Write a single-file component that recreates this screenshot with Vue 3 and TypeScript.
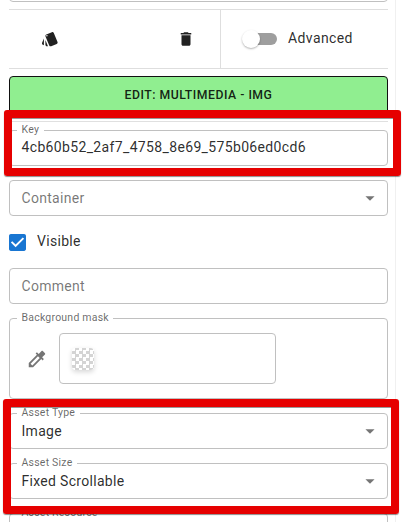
<script setup lang="ts">
import { ref } from 'vue'

interface SelectField {
  label: string
  value: string
}

const advanced = ref(false)
const visible = ref(true)
const key = '4cb60b52_2af7_4758_8e69_575b06ed0cd6'
const assetFields: SelectField[] = [
  { label: 'Asset Type', value: 'Image' },
  { label: 'Asset Size', value: 'Fixed Scrollable' },
]
</script>

<template>
  <div class="page">
    <main class="panel">
      <div class="field previous"></div>

      <div class="toolbar">
        <div class="actions">
          <svg class="icon-18" viewBox="0 0 24 24"><path d="M2.53 19.65l1.34.56v-9.03l-2.43 5.86c-.41 1.02.08 2.19 1.09 2.61zm19.5-3.7L17.07 3.98c-.31-.75-1.04-1.21-1.81-1.23-.26 0-.53.04-.79.15L7.1 5.95c-.75.31-1.21 1.03-1.23 1.8-.01.27.04.54.15.8l4.96 11.97c.31.76 1.05 1.22 1.83 1.23.26 0 .52-.05.77-.15l7.36-3.05c1.02-.42 1.51-1.59 1.09-2.6zM7.88 8.75c-.55 0-1-.45-1-1s.45-1 1-1 1 .45 1 1-.45 1-1 1zm-2 11c0 1.1.9 2 2 2h1.45l-3.45-8.34v6.34z" /></svg>
          <svg class="icon-18" viewBox="0 0 24 24"><path d="M6 19c0 1.1.9 2 2 2h8c1.1 0 2-.9 2-2V7H6v12zM19 4h-3.5l-1-1h-5l-1 1H5v2h14V4z" /></svg>
        </div>
        <div class="advanced" @click="advanced = !advanced">
          <span class="switch" :class="{ on: advanced }"><span class="thumb"></span></span>
          <span class="text adv">Advanced</span>
        </div>
      </div>

      <button class="edit">Edit: Multimedia - Img</button>

      <section class="details">
        <div class="field">
          <span class="label">Key</span>
          <span class="text key">{{ key }}</span>
        </div>

        <div class="field container">
          <span class="text placeholder">Container</span>
          <svg class="arrow" viewBox="0 0 24 24"><path d="M7 10l5 5 5-5z" /></svg>
        </div>

        <div class="check" @click="visible = !visible">
          <svg class="box" viewBox="3 3 18 18">
            <path v-if="visible" d="M19 3H5c-1.11 0-2 .9-2 2v14c0 1.1.89 2 2 2h14c1.11 0 2-.9 2-2V5c0-1.1-.89-2-2-2zm-9 14l-5-5 1.41-1.41L10 14.17l7.59-7.59L19 8l-9 9z" />
            <path v-else d="M19 5v14H5V5h14m0-2H5c-1.1 0-2 .9-2 2v14c0 1.1.9 2 2 2h14c1.1 0 2-.9 2-2V5c0-1.1-.9-2-2-2z" />
          </svg>
          <span class="text check-text">Visible</span>
        </div>

        <div class="field comment">
          <span class="text placeholder">Comment</span>
        </div>

        <div class="mask">
          <span class="label">Background mask</span>
          <svg class="picker" viewBox="0 0 24 24"><path d="M20.71 5.63l-2.34-2.34c-.39-.39-1.02-.39-1.41 0l-3.12 3.12-1.93-1.91-1.41 1.41 1.42 1.42L3 16.25V21h4.75l8.92-8.92 1.42 1.42 1.41-1.41-1.92-1.92 3.12-3.12c.4-.4.4-1.03.01-1.42zM6.92 19L5 17.08l8.06-8.06 1.92 1.92L6.92 19z" /></svg>
          <div class="color"><span class="swatch"></span></div>
        </div>

        <div v-for="f in assetFields" :key="f.label" class="field asset">
          <span class="label">{{ f.label }}</span>
          <span class="text">{{ f.value }}</span>
          <svg class="arrow" viewBox="0 0 24 24"><path d="M7 10l5 5 5-5z" /></svg>
        </div>

        <div class="field asset">
          <span class="label">Asset Resource</span>
        </div>
      </section>
    </main>

    <div class="mark mark-key"></div>
    <div class="mark mark-asset"></div>
  </div>
</template>

<style>
body {
  background: #fff;
  overflow: hidden;
}
</style>

<style scoped>
.page {
  position: relative;
  width: 406px;
  height: 522px;
  overflow: hidden;
  font-family: Roboto, 'Liberation Sans', sans-serif;
  color: rgba(0, 0, 0, 0.84);
}
.panel {
  box-sizing: border-box;
  width: 396px;
  height: 522px;
  padding: 0 7px 0 9px;
  border-right: 1px solid #f0f0f0;
  overflow: hidden;
}
.field {
  position: relative;
  box-sizing: border-box;
  height: 36px;
  display: flex;
  align-items: center;
  justify-content: space-between;
  padding: 0 6.5px 0 11.5px;
  border: 1px solid #c0c0c0;
  border-radius: 4px;
}
.previous {
  margin-top: -34px;
}
.text {
  font-size: 14px;
  line-height: 20px;
  letter-spacing: 0.3px;
  white-space: nowrap;
}
.key {
  margin-top: -2px;
  letter-spacing: 0.35px;
}
.placeholder {
  color: rgba(0, 0, 0, 0.55);
}
.label {
  position: absolute;
  top: -7px;
  left: 7px;
  padding: 0 4.5px;
  background: #fff;
  font-size: 10.5px;
  line-height: 12px;
  letter-spacing: 0.22px;
  color: rgba(0, 0, 0, 0.6);
  white-space: nowrap;
}
.toolbar {
  box-sizing: border-box;
  display: flex;
  height: 60px;
  margin-top: 7px;
  border-top: 1px solid #dedede;
  border-bottom: 1px solid #dedede;
}
.actions {
  box-sizing: border-box;
  width: 212px;
  display: flex;
  align-items: center;
  justify-content: space-between;
  padding: 0 25px 0 32px;
  border-right: 1px solid #dedede;
}
.icon-18 {
  width: 18px;
  height: 18px;
  fill: #212121;
}
.advanced {
  display: flex;
  align-items: center;
  padding-left: 24px;
}
.switch {
  display: flex;
  align-items: center;
  width: 32px;
  height: 12px;
  border-radius: 6px;
  background: #9e9e9e;
}
.switch.on {
  justify-content: flex-end;
}
.thumb {
  width: 18px;
  height: 18px;
  margin-left: -3px;
  border-radius: 50%;
  background: #fff;
  box-shadow: 0 1px 2px rgba(0, 0, 0, 0.3);
}
.adv {
  margin: -2px 0 0 11px;
  letter-spacing: 0.4px;
}
.edit {
  display: block;
  box-sizing: border-box;
  width: 100%;
  height: 38px;
  margin-top: 7px;
  padding: 0;
  border: 1px solid #111;
  border-radius: 4px;
  background: #90ee90;
  font-family: inherit;
  font-size: 12.25px;
  font-weight: 500;
  letter-spacing: 0.5px;
  text-transform: uppercase;
  color: rgba(0, 0, 0, 0.87);
}
.details {
  margin-top: 7px;
  padding-top: 8px;
  border-top: 1px solid #e0e0e0;
}
.container {
  margin-top: 14px;
}
.arrow {
  width: 22px;
  height: 22px;
  fill: rgba(0, 0, 0, 0.54);
}
.check {
  display: flex;
  align-items: center;
  gap: 11px;
  height: 52px;
}
.check-text {
  margin-top: -2px;
}
.box {
  width: 17px;
  height: 17px;
  fill: #1976d2;
}
.mask {
  position: relative;
  box-sizing: border-box;
  height: 81px;
  margin-top: 14px;
  padding-left: 16px;
  display: flex;
  align-items: center;
  gap: 11px;
  border: 1px solid #c0c0c0;
  border-radius: 4px;
}
.picker {
  width: 22px;
  height: 22px;
  fill: rgba(0, 0, 0, 0.54);
}
.color {
  box-sizing: border-box;
  width: 217px;
  height: 51px;
  padding-left: 12px;
  display: flex;
  align-items: center;
  border: 1px solid #c0c0c0;
  border-radius: 4px;
}
.swatch {
  width: 22px;
  height: 22px;
  border-radius: 4px;
  background: repeating-conic-gradient(#d4d4d4 0 25%, #fff 0 50%) 0 -1px / 7px 7px;
  box-shadow: 0 2px 5px rgba(0, 0, 0, 0.16);
}
.asset {
  margin-top: 14px;
}
.mark {
  position: absolute;
  box-sizing: border-box;
  border: 8px solid #e60000;
  border-radius: 3px;
  box-shadow: 0 1px 1px rgba(0, 0, 0, 0.45), inset 0 1px 0 rgba(0, 0, 0, 0.4);
}
.mark-key {
  left: 4px;
  top: 110px;
  width: 397px;
  height: 66px;
}
.mark-asset {
  left: 3px;
  top: 399px;
  width: 396px;
  height: 115px;
}
</style>
